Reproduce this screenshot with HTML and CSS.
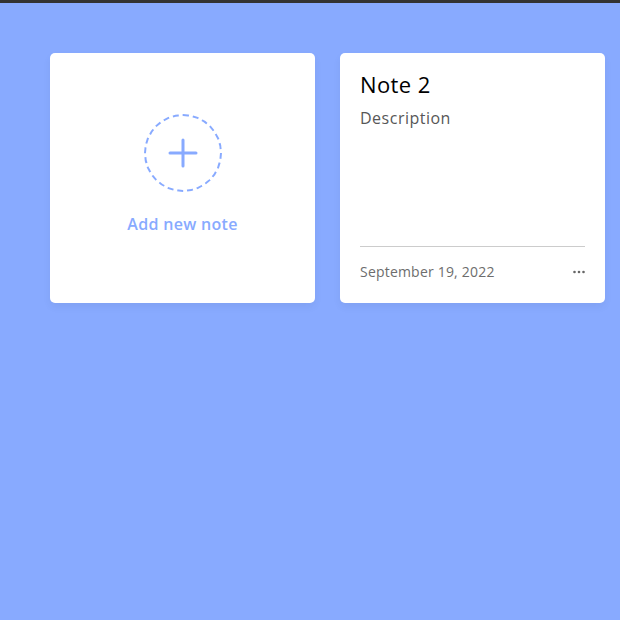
FILE: index.html
```html
<!DOCTYPE html>
<html>
<head>
<meta charset="utf-8">
<link rel="stylesheet" href="styles.css">
</head>
<body>
<div class="topbar"></div>
<main class="notes">
  <div class="card add-card">
    <div class="add-circle">
      <svg width="30" height="30" viewBox="0 0 30 30"><path d="M15 2 V28 M2 15 H28" stroke="#88aaff" stroke-width="3" stroke-linecap="round" fill="none"/></svg>
    </div>
    <p class="add-label">Add new note</p>
  </div>
  <div class="card note-card">
    <div class="note-body">
      <h2 class="note-title">Note 2</h2>
      <p class="note-desc">Description</p>
    </div>
    <div class="note-footer">
      <span class="note-date">September 19, 2022</span>
      <span class="note-menu">
        <svg width="12" height="4" viewBox="0 0 12 4"><circle cx="1.5" cy="2" r="1.3" fill="#666"/><circle cx="6" cy="2" r="1.3" fill="#666"/><circle cx="10.5" cy="2" r="1.3" fill="#666"/></svg>
      </span>
    </div>
  </div>
</main>
</body>
</html>
```
FILE: styles.css
```css
* { box-sizing: border-box; }
html, body { margin: 0; padding: 0; }
body {
  background: #88aaff;
  font-family: "Open Sans", "DejaVu Sans", sans-serif;
  min-height: 620px;
}
.topbar { height: 3px; background: #333; }
.notes {
  display: grid;
  grid-template-columns: 265px 265px;
  gap: 25px;
  padding: 50px 0 0 50px;
}
.card {
  background: #fff;
  border-radius: 5px;
  height: 250px;
  box-shadow: 0 4px 8px rgba(0,0,0,0.05);
}
.add-card {
  display: flex;
  flex-direction: column;
  align-items: center;
  padding-top: 61px;
}
.add-circle {
  width: 78px;
  height: 78px;
  border: 2px dashed #88aaff;
  border-radius: 50%;
  display: flex;
  align-items: center;
  justify-content: center;
}
.add-label {
  margin: 20px 0 0;
  color: #88aaff;
  font-size: 16px;
  font-weight: 600;
  letter-spacing: 0.3px;
  line-height: 24px;
}
.note-card {
  display: flex;
  flex-direction: column;
  padding: 15px 20px 20px;
}
.note-body { flex: 1; }
.note-title {
  margin: 0;
  font-size: 22px;
  font-weight: 500;
  letter-spacing: 0.4px;
  line-height: 32px;
  color: #000;
}
.note-desc {
  margin: 6px 0 0;
  font-size: 16px;
  letter-spacing: 0.5px;
  line-height: 24px;
  color: #575757;
}
.note-footer {
  border-top: 1px solid #ccc;
  padding-top: 14px;
  display: flex;
  justify-content: space-between;
  align-items: center;
  height: 37px;
}
.note-date {
  font-size: 14px;
  letter-spacing: 0.2px;
  color: #6d6d6d;
  line-height: 22px;
}
.note-menu { display: flex; align-items: center; }
```
